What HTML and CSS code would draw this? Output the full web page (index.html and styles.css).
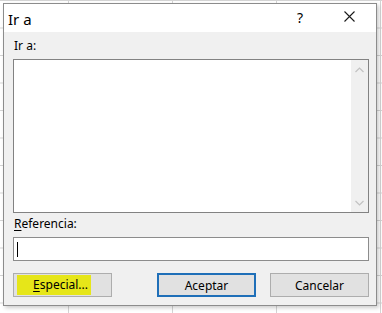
FILE: index.html
```html
<!DOCTYPE html>
<html lang="es">
<head>
    <meta charset="UTF-8">
    <meta name="viewport" content="width=device-width, initial-scale=1.0">
    <title>Ir a</title>
    <link rel="stylesheet" href="styles.css">
</head>
<body>
    <div class="dialog">
        <div class="title-bar">
            <span class="title">Ir a</span>
            <span class="help">?</span>
            <svg class="close" width="11" height="11" viewBox="0 0 11 11">
                <path d="M0.5 0.5 L10.5 10.5 M10.5 0.5 L0.5 10.5" stroke="#1a1a1a" stroke-width="1.1" fill="none"/>
            </svg>
        </div>
        <div class="content">
            <div class="label">Ir a:</div>
            <div class="list">
                <div class="list-items"></div>
                <div class="scrollbar">
                    <svg width="9" height="6" viewBox="0 0 9 6"><path d="M0.5 5 L4.5 1 L8.5 5" stroke="#c2c2c2" stroke-width="1.2" fill="none"/></svg>
                    <svg width="9" height="6" viewBox="0 0 9 6"><path d="M0.5 1 L4.5 5 L8.5 1" stroke="#c2c2c2" stroke-width="1.2" fill="none"/></svg>
                </div>
            </div>
            <div class="label ref-label"><u>R</u>eferencia:</div>
            <div class="input"><span class="caret"></span></div>
            <div class="buttons">
                <button class="btn"><span class="marker"><u>E</u>special...</span></button>
                <button class="btn btn-default">Aceptar</button>
                <button class="btn">Cancelar</button>
            </div>
        </div>
    </div>
</body>
</html>
```

FILE: styles.css
```css
html, body {
    margin: 0;
    height: 100%;
}
body {
    background-color: #ffffff;
    background-image:
        linear-gradient(to right, #d4d4d4 1px, transparent 1px),
        linear-gradient(to bottom, #d4d4d4 1px, transparent 1px);
    background-size: 104px 27.5px;
    background-position: 68px 0;
    font-family: "Noto Sans", "Open Sans", sans-serif;
    color: #000;
    overflow: hidden;
    padding-top: 3px;
    padding-left: 3px;
    box-sizing: border-box;
}
.dialog {
    width: 374px;
    height: 303px;
    box-sizing: border-box;
    border: 1px solid #8c8c8c;
    background: #f0f0f0;
    box-shadow: 2px 2px 4px rgba(0, 0, 0, 0.2);
    display: flex;
    flex-direction: column;
}
.title-bar {
    height: 28px;
    background: #ffffff;
    display: flex;
    align-items: center;
    padding-left: 4px;
}
.title {
    font-size: 15px;
    flex: 1;
    margin-top: 1px;
}
.help {
    font-size: 14px;
    margin-right: 41px;
    margin-top: -2px;
}
.close {
    margin-right: 21px;
    margin-top: -3px;
}
.content {
    flex: 1;
    padding: 6px 7px 0 9px;
}
.label {
    font-size: 12px;
    line-height: 16px;
    height: 18px;
    padding-left: 1px;
}
.label u {
    text-underline-offset: 2px;
}
.list {
    height: 154px;
    border: 1px solid #828282;
    background: #ffffff;
    display: flex;
    box-sizing: border-box;
    margin-top: 3px;
}
.list-items {
    flex: 1;
}
.scrollbar {
    width: 17px;
    background: #f0f0f0;
    display: flex;
    flex-direction: column;
    justify-content: space-between;
    align-items: center;
    padding: 7px 0 6px;
}
.ref-label {
    margin-top: 3px;
}
.input {
    height: 24px;
    box-sizing: border-box;
    border: 1px solid #8c8c8c;
    background: #ffffff;
    margin-top: 3px;
    padding: 4px 3px;
}
.caret {
    display: block;
    width: 1px;
    height: 15px;
    background: #000;
}
.buttons {
    display: flex;
    justify-content: space-between;
    margin-top: 12px;
}
.btn {
    width: 99px;
    height: 24px;
    box-sizing: border-box;
    border: 1px solid #adadad;
    background: #e1e1e1;
    font-family: "Noto Sans", "Open Sans", sans-serif;
    font-size: 12px;
    color: #000;
    padding: 0;
}
.btn:nth-child(2) {
    margin-left: 44px;
}
.btn:nth-child(3) {
    margin-left: 13px;
}
.btn-default {
    border: 2px solid #1f6fb8;
}
.marker {
    display: inline-block;
    background: #e6e619;
    width: 74px;
    height: 20px;
    line-height: 20px;
    margin-left: -17px;
    text-align: right;
    padding-right: 3px;
    box-sizing: border-box;
}
.marker u {
    text-underline-offset: 2px;
}
```
